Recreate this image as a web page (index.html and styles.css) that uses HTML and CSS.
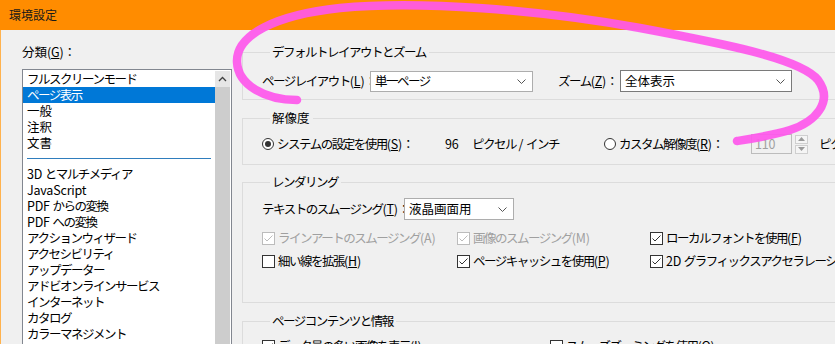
FILE: index.html
```html
<!DOCTYPE html>
<html lang="ja">
<head>
  <meta charset="UTF-8">
  <meta name="viewport" content="width=device-width, initial-scale=1.0">
  <title>環境設定</title>
  <link rel="stylesheet" href="styles.css">
</head>
<body>
  <div class="window">
    <!-- Title bar -->
    <header class="titlebar">環境設定</header>

    <div class="dialog">
      <!-- Category list -->
      <div class="categories">
        <div class="cat-label">分類<span class="key">(<u>G</u>)</span>：</div>
        <div class="listbox">
          <ul class="list">
            <li>フルスクリーンモード</li>
            <li class="selected">ページ表示</li>
            <li class="kj">一般</li>
            <li class="kj">注釈</li>
            <li class="kj">文書</li>
            <li class="separator"><span></span></li>
            <li><span class="lat">3D </span>とマルチメディア</li>
            <li class="lat">JavaScript</li>
            <li><span class="lat">PDF </span>からの変換</li>
            <li><span class="lat">PDF </span>への変換</li>
            <li>アクションウィザード</li>
            <li>アクセシビリティ</li>
            <li>アップデーター</li>
            <li>アドビオンラインサービス</li>
            <li>インターネット</li>
            <li>カタログ</li>
            <li>カラーマネジメント</li>
          </ul>
          <div class="scrollbar">
            <div class="scroll-up">
              <svg width="9" height="6" viewBox="0 0 9 6"><path d="M1 5L4.5 1.5L8 5" fill="none" stroke="#404040" stroke-width="1.3"/></svg>
            </div>
            <div class="scroll-thumb"></div>
          </div>
        </div>
      </div>

      <!-- Settings -->
      <div class="settings">
        <fieldset class="group">
          <legend>デフォルトレイアウトとズーム</legend>
          <div class="row">
            <span class="field-label layout-label">ページレイアウト<span class="key">(<u>L</u>)</span>：</span>
            <div class="select select-layout">
              <span>単一ページ</span>
              <svg width="9" height="5" viewBox="0 0 9 5"><path d="M0.5 0.5L4.5 4.5L8.5 0.5" fill="none" stroke="#555" stroke-width="1"/></svg>
            </div>
            <span class="field-label zoom-label">ズーム<span class="key">(<u>Z</u>)</span>：</span>
            <div class="select select-zoom">
              <span class="kj">全体表示</span>
              <svg width="9" height="5" viewBox="0 0 9 5"><path d="M0.5 0.5L4.5 4.5L8.5 0.5" fill="none" stroke="#555" stroke-width="1"/></svg>
            </div>
          </div>
        </fieldset>

        <fieldset class="group group-resolution">
          <legend class="kj">解像度</legend>
          <div class="row res-row">
            <span class="radio-item res-system"><span class="radio checked"></span>システムの設定を使用<span class="key">(<u>S</u>)</span>：</span>
            <span class="res-value lat">96</span>
            <span class="res-unit">ピクセル<span class="lat"> / </span>インチ</span>
            <span class="radio-item res-custom"><span class="radio"></span>カスタム解像度<span class="key">(<u>R</u>)</span>：</span>
            <span class="num-input lat">110</span>
            <span class="spinner">
              <span class="spin-btn"><svg width="7" height="4" viewBox="0 0 7 4"><path d="M0 4L3.5 0L7 4Z" fill="#9a9a9a"/></svg></span>
              <span class="spin-btn"><svg width="7" height="4" viewBox="0 0 7 4"><path d="M0 0L3.5 4L7 0Z" fill="#9a9a9a"/></svg></span>
            </span>
            <span class="res-unit2">ピクセル<span class="lat"> / </span>インチ</span>
          </div>
        </fieldset>

        <fieldset class="group group-rendering">
          <legend>レンダリング</legend>
          <div class="row">
            <span class="field-label smooth-label">テキストのスムージング<span class="key">(<u>T</u>)</span>：</span>
            <div class="select select-smooth">
              <span class="kj">液晶画面用</span>
              <svg width="9" height="5" viewBox="0 0 9 5"><path d="M0.5 0.5L4.5 4.5L8.5 0.5" fill="none" stroke="#555" stroke-width="1"/></svg>
            </div>
          </div>
          <div class="check-grid">
            <span class="check-item disabled"><span class="checkbox checked"><svg width="11" height="11" viewBox="0 0 11 11"><path d="M1.5 5.5L4 8L9.5 2.5" fill="none" stroke="currentColor" stroke-width="1"/></svg></span>ラインアートのスムージング<span class="key">(A)</span></span>
            <span class="check-item disabled"><span class="checkbox checked"><svg width="11" height="11" viewBox="0 0 11 11"><path d="M1.5 5.5L4 8L9.5 2.5" fill="none" stroke="currentColor" stroke-width="1"/></svg></span>画像のスムージング<span class="key">(M)</span></span>
            <span class="check-item"><span class="checkbox checked"><svg width="11" height="11" viewBox="0 0 11 11"><path d="M1.5 5.5L4 8L9.5 2.5" fill="none" stroke="currentColor" stroke-width="1"/></svg></span>ローカルフォントを使用<span class="key">(<u>F</u>)</span></span>
            <span class="check-item"><span class="checkbox"></span>細い線を拡張<span class="key">(<u>H</u>)</span></span>
            <span class="check-item"><span class="checkbox checked"><svg width="11" height="11" viewBox="0 0 11 11"><path d="M1.5 5.5L4 8L9.5 2.5" fill="none" stroke="currentColor" stroke-width="1"/></svg></span>ページキャッシュを使用<span class="key">(<u>P</u>)</span></span>
            <span class="check-item"><span class="checkbox checked"><svg width="11" height="11" viewBox="0 0 11 11"><path d="M1.5 5.5L4 8L9.5 2.5" fill="none" stroke="currentColor" stroke-width="1"/></svg></span><span class="lat">2D&nbsp;</span>グラフィックスアクセラレーションを使用<span class="key">(<u>G</u>)</span></span>
          </div>
        </fieldset>

        <fieldset class="group group-content">
          <legend>ページコンテンツと情報</legend>
          <div class="check-grid check-grid-2">
            <span class="check-item"><span class="checkbox checked"><svg width="11" height="11" viewBox="0 0 11 11"><path d="M1.5 5.5L4 8L9.5 2.5" fill="none" stroke="currentColor" stroke-width="1"/></svg></span>データ量の多い画像を表示<span class="key">(<u>I</u>)</span></span>
            <span class="check-item"><span class="checkbox"></span>スムーズズーミングを使用<span class="key">(<u>O</u>)</span></span>
          </div>
        </fieldset>
      </div>
    </div>
  </div>

  <!-- Hand-drawn highlight stroke -->
  <svg class="scribble" width="835" height="344" viewBox="0 0 835 344">
    <path d="M297 100 C265 100 238 85 237 62 C236 35 275 15 340 8 C420 0 540 10 640 28 C720 43 800 58 818 80 C834 102 815 122 790 130 C770 136 750 139 737 141" fill="none" stroke="#ff58ec" stroke-width="8.5" stroke-linecap="round"/>
  </svg>
</body>
</html>
```

FILE: styles.css
```css
/* Reset and base styles */
* {
  margin: 0;
  padding: 0;
  box-sizing: border-box;
}

body {
  font-family: "Noto Sans CJK JP", sans-serif;
  font-size: 12.5px;
  line-height: 16px;
  letter-spacing: -1.5px;
  color: #000;
  background-color: #f0f0f0;
  width: 835px;
  height: 344px;
  overflow: hidden;
  position: relative;
}

.kj {
  letter-spacing: 0;
}

.lat,
.key {
  letter-spacing: -0.2px;
}

u {
  text-decoration: underline;
  text-underline-offset: 1px;
}

/* Title bar */
.titlebar {
  height: 30px;
  line-height: 30px;
  padding-left: 9px;
  font-size: 12px;
  letter-spacing: 0;
  background-color: #ff8c00;
  color: #1a1a1a;
}

.dialog {
  display: flex;
  border-left: 1px solid #ffb24d;
  height: 314px;
}

/* Category list */
.categories {
  padding-left: 21px;
  padding-top: 14px;
  width: 231px;
  flex-shrink: 0;
}

.cat-label {
  height: 16px;
  margin-bottom: 9px;
  letter-spacing: 0;
}

.listbox {
  display: flex;
  width: 210px;
  height: 300px;
  border: 1px solid #828790;
  background-color: white;
}

.list {
  list-style: none;
  flex: 1;
  padding-top: 1px;
}

.list li {
  height: 16px;
  padding-left: 4px;
  white-space: nowrap;
}

.list li.selected {
  background-color: #0078d7;
  color: white;
}

.list li.separator {
  height: 15px;
  padding: 7px 4px 0 4px;
}

.list li.separator span {
  display: block;
  height: 1px;
  background-color: #2f7dbd;
}

.scrollbar {
  width: 15px;
  margin: 1px 1px 0 0;
  display: flex;
  flex-direction: column;
}

.scroll-up {
  height: 16px;
  background-color: #e6e6e6;
  display: flex;
  align-items: center;
  justify-content: center;
}

.scroll-thumb {
  flex: 1;
  background-color: #cdcdcd;
}

/* Settings groups */
.settings {
  margin-left: 10px;
  padding-top: 14px;
  width: 640px;
  flex-shrink: 0;
}

.group {
  border: 1px solid #dcdcdc;
  padding: 10px 0 7px 19px;
  min-width: 0;
}

.group legend {
  margin-left: 8px;
  padding: 0 3px 0 2px;
  line-height: 16px;
}

.group-resolution {
  margin-top: 10px;
  padding-top: 8px;
  padding-bottom: 10px;
}

.group-rendering {
  margin-top: 9px;
  padding-top: 8px;
  padding-bottom: 31px;
}

.group-content {
  margin-top: 10px;
  padding-top: 7px;
  padding-bottom: 10px;
}

.row {
  display: flex;
  align-items: center;
  white-space: nowrap;
}

.row > * {
  flex-shrink: 0;
}

.layout-label {
  width: 108px;
}

.zoom-label {
  margin-left: 25px;
  width: 62px;
}

.smooth-label {
  width: 142px;
}

/* Dropdowns */
.select {
  display: flex;
  align-items: center;
  justify-content: space-between;
  background-color: white;
  border: 1px solid #adadad;
  padding: 0 6px 0 4px;
}

.select-layout {
  width: 163px;
  height: 21px;
}

.select-zoom {
  width: 172px;
  height: 22px;
  border-color: #7a7a7a;
}

.select-smooth {
  width: 110px;
  height: 22px;
}

/* Resolution row */
.res-row {
  height: 20px;
}

.radio-item {
  display: flex;
  align-items: center;
}

.radio {
  width: 12px;
  height: 12px;
  border: 1px solid #333;
  border-radius: 50%;
  margin-right: 3px;
  background-color: white;
  display: flex;
  align-items: center;
  justify-content: center;
}

.radio.checked::after {
  content: "";
  width: 6px;
  height: 6px;
  border-radius: 50%;
  background-color: #333;
}

.res-system {
  width: 183px;
}

.res-value {
  width: 27px;
}

.res-unit {
  width: 132px;
}

.res-custom {
  width: 147px;
}

.num-input {
  width: 41px;
  height: 20px;
  border: 1px solid #bcbcbc;
  color: #a0a0a0;
  padding-left: 3px;
  line-height: 18px;
}

.spinner {
  display: flex;
  flex-direction: column;
  gap: 1px;
  margin-left: 3px;
}

.spin-btn {
  width: 13px;
  height: 9px;
  border: 1px solid #cfcfcf;
  background-color: #f5f5f5;
  display: flex;
  align-items: center;
  justify-content: center;
}

.res-unit2 {
  margin-left: 11px;
}

/* Checkboxes */
.check-grid {
  display: grid;
  grid-template-columns: 195px 193px auto;
  grid-auto-rows: 20px;
  row-gap: 3px;
  margin-top: 8px;
  white-space: nowrap;
}

.check-grid-2 {
  grid-template-columns: 288px auto;
  margin-top: 0;
}

.check-item {
  display: flex;
  align-items: center;
}

.check-item.disabled {
  color: #a0a0a0;
}

.checkbox {
  width: 13px;
  height: 13px;
  border: 1px solid #333;
  background-color: white;
  margin-right: 3px;
  display: flex;
  align-items: center;
  justify-content: center;
  color: #333;
  flex-shrink: 0;
}

.check-item.disabled .checkbox {
  border-color: #bcbcbc;
  color: #bcbcbc;
}

/* Highlight scribble */
.scribble {
  position: absolute;
  top: 0;
  left: 0;
  pointer-events: none;
  opacity: 0.92;
}
```
